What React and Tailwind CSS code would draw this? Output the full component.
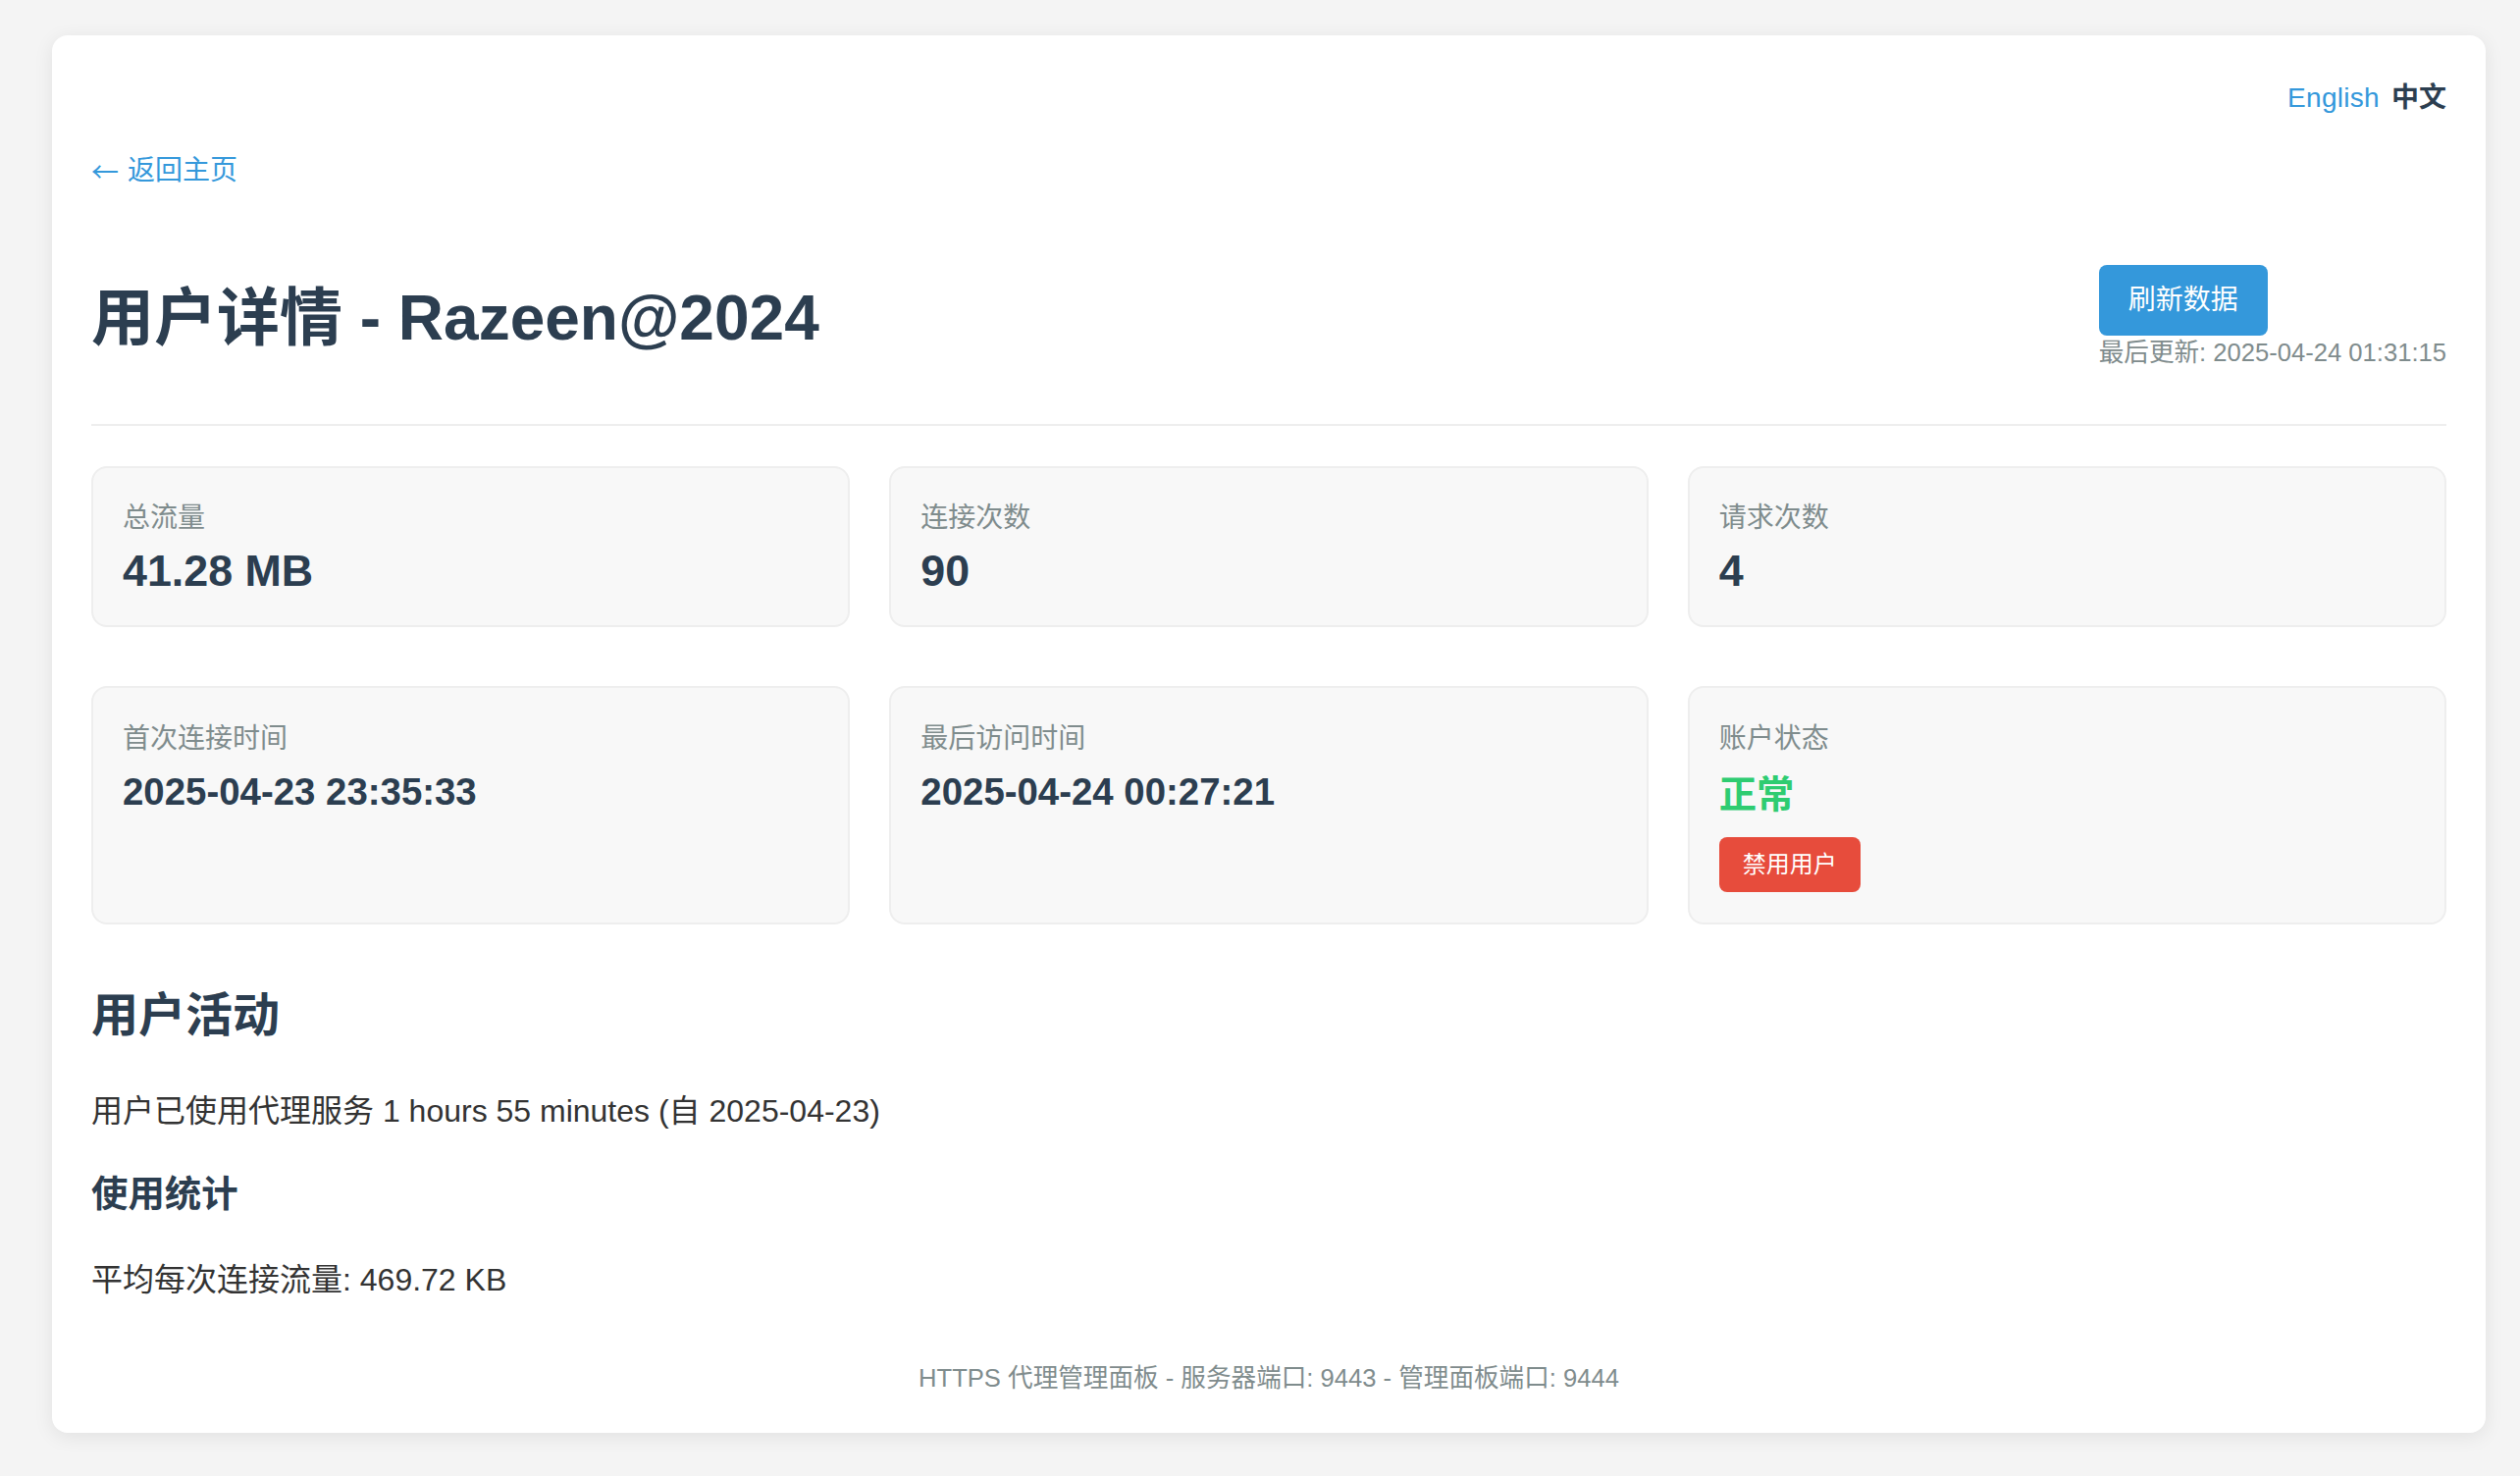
export default function App() {
  const row1 = [
    { label: "总流量", value: "41.28 MB" },
    { label: "连接次数", value: "90" },
    { label: "请求次数", value: "4" },
  ];

  return (
    <div
      className="min-h-screen bg-[#f4f4f4] pt-[36px] pb-[42px]"
      style={{ fontFamily: '"Liberation Sans", "Noto Sans CJK SC", sans-serif' }}
    >
      <div className="ml-[53px] w-[2480px] rounded-[16px] bg-white px-[40px] pt-[40px] pb-[41px] shadow-[0_4px_20px_rgba(0,0,0,0.08)]">
        {/* language switch */}
        <div className="flex justify-end gap-[12px] pt-[8px] text-[28px] leading-[32px]">
          <span className="tracking-[0.3px] text-[#3498db]">English</span>
          <span className="font-bold text-[#2c3e50]">中文</span>
        </div>

        <div className="mt-[42px] flex items-center text-[28px] leading-[32px] text-[#3498db]">
          <span className="mr-[9px] font-['Noto_Sans_CJK_SC',sans-serif]">←</span>
          <span>返回主页</span>
        </div>

        {/* header */}
        <div className="mt-[80px] flex items-center justify-between border-b-2 border-[#eeeeee] pb-[58px]">
          <h1 className="pt-[4px] text-[64px] font-bold leading-[74px] text-[#2c3e50]">用户详情 - Razeen@2024</h1>
          <div className="flex flex-col items-start">
            <button className="rounded-[8px] bg-[#3498db] px-[30px] py-[20px] text-[28px] leading-[32px] text-white">
              刷新数据
            </button>
            <div className="mt-[2px] text-[25.6px] leading-[30px] text-[#7f8c8d]">最后更新: 2025-04-24 01:31:15</div>
          </div>
        </div>

        {/* stats row */}
        <div className="mt-[41px] grid grid-cols-3 gap-[40px]">
          {row1.map((c) => (
            <div key={c.label} className="rounded-[16px] border-2 border-[#eeeeee] bg-[#f8f8f8] px-[30px] pt-[34px] pb-[30px]">
              <div className="text-[28px] leading-[34px] text-[#7f8c8d]">{c.label}</div>
              <div className="mt-[10px] text-[44.8px] font-bold leading-[52px] text-[#2c3e50]">{c.value}</div>
            </div>
          ))}
        </div>

        <div className="mt-[60px] grid grid-cols-3 gap-[40px]">
          <div className="rounded-[16px] border-2 border-[#eeeeee] bg-[#f8f8f8] px-[30px] pt-[35px] pb-[30px]">
            <div className="text-[28px] leading-[34px] text-[#7f8c8d]">首次连接时间</div>
            <div className="mt-[14px] text-[38.4px] font-bold leading-[46px] text-[#2c3e50]">2025-04-23 23:35:33</div>
          </div>
          <div className="rounded-[16px] border-2 border-[#eeeeee] bg-[#f8f8f8] px-[30px] pt-[35px] pb-[30px]">
            <div className="text-[28px] leading-[34px] text-[#7f8c8d]">最后访问时间</div>
            <div className="mt-[14px] text-[38.4px] font-bold leading-[46px] text-[#2c3e50]">2025-04-24 00:27:21</div>
          </div>
          <div className="rounded-[16px] border-2 border-[#eeeeee] bg-[#f8f8f8] px-[30px] pt-[35px] pb-[31px]">
            <div className="text-[28px] leading-[34px] text-[#7f8c8d]">账户状态</div>
            <div className="mt-[17px] text-[38.4px] font-bold leading-[46px] text-[#2ecc71]">正常</div>
            <button className="mt-[20px] rounded-[8px] bg-[#e74c3c] px-[24px] py-[14px] text-[24px] leading-[28px] text-white">
              禁用用户
            </button>
          </div>
        </div>

        {/* activity */}
        <h2 className="mt-[65px] text-[48px] font-bold leading-[56px] text-[#2c3e50]">用户活动</h2>
        <p className="mt-[50px] text-[32px] leading-[38px] text-[#333333]">
          用户已使用代理服务 1 hours 55 minutes (自 2025-04-23)
        </p>
        <h3 className="mt-[44px] text-[37.4px] font-bold leading-[44px] text-[#2c3e50]">使用统计</h3>
        <p className="mt-[46px] text-[32px] leading-[38px] text-[#333333]">平均每次连接流量: 469.72 KB</p>

        <div className="mt-[66px] text-center text-[25.6px] leading-[30px] text-[#7f8c8d]">
          HTTPS 代理管理面板 - 服务器端口: 9443 - 管理面板端口: 9444
        </div>
      </div>
    </div>
  );
}
